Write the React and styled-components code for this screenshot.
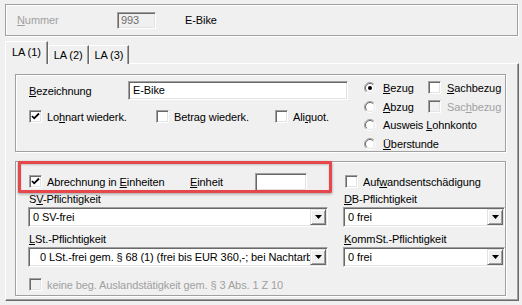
import React from 'react';
import styled, { createGlobalStyle, css } from 'styled-components';

const GlobalStyle = createGlobalStyle`
  html, body {
    margin: 0;
    padding: 0;
    background: #f0f0f0;
  }
  body {
    font-family: "Liberation Sans", Arial, sans-serif;
    font-size: 11px;
    letter-spacing: -0.1px;
    color: #000;
  }
  * {
    box-sizing: border-box;
  }
`;

const sunken = css`
  border: 1px solid;
  border-color: #a0a0a0 #fff #fff #a0a0a0;
  box-shadow: inset 1px 1px 0 #696969, inset -1px -1px 0 #e3e3e3;
`;

const raised = css`
  border: 1px solid;
  border-color: #e3e3e3 #696969 #696969 #e3e3e3;
  box-shadow: inset 1px 1px 0 #fff, inset -1px -1px 0 #a0a0a0;
`;

const Window = styled.div`
  width: 522px;
  height: 305px;
  padding: 4px 3px 0 5px;
  background: #f0f0f0;
  overflow: hidden;
`;

const EtchedBox = styled.div`
  position: relative;
  border: 1px solid #a0a0a0;
  box-shadow: inset 1px 1px 0 #fff, 1px 1px 0 #fff;
  width: ${p => p.$w}px;
  height: ${p => p.$h}px;
  margin-top: ${p => p.$mt || 0}px;
`;

const HeaderRow = styled.div`
  display: flex;
  align-items: center;
  height: 100%;
  padding-left: 11px;
`;

const Label = styled.span`
  display: inline-block;
  width: ${p => (p.$w ? `${p.$w}px` : 'auto')};
  flex: none;
  white-space: nowrap;
  color: ${p => (p.$disabled ? '#a0a0a0' : '#000')};
`;

const NumField = styled.div`
  ${sunken};
  width: 39px;
  height: 17px;
  padding: 1px 0 0 3px;
  color: #6d6d6d;
  background: #f0f0f0;
`;

const Title = styled.span`
  margin-left: 29px;
`;

const TabStrip = styled.div`
  display: flex;
  align-items: flex-end;
  height: 22px;
  margin-top: 6px;
  position: relative;
  z-index: 1;
  margin-bottom: -1px;
`;

const Tab = styled.div`
  height: ${p => (p.$active ? 23 : 19)}px;
  padding: ${p => (p.$active ? '4px 6px 0' : '3px 5px 0')};
  border-top: 1px solid #fff;
  border-left: 1px solid #fff;
  border-right: 1px solid #696969;
  box-shadow: inset -1px 0 0 #a0a0a0;
  background: #f0f0f0;
  white-space: nowrap;
`;

const Panel = styled.div`
  width: 514px;
  height: 238px;
  padding: 10px 0 0 9px;
  border-top: 1px solid #fff;
  border-left: 1px solid #fff;
  border-right: 1px solid #696969;
  border-bottom: 1px solid #696969;
  box-shadow: inset -1px -1px 0 #a0a0a0;
`;

const Split = styled.div`
  display: flex;
  height: 100%;
`;

const LeftPart = styled.div`
  width: 348px;
  padding: 6px 0 0 13px;
`;

const FieldRow = styled.div`
  display: flex;
  align-items: center;
  height: 19px;
`;

const TextField = styled.div`
  ${sunken};
  width: ${p => p.$w}px;
  height: ${p => p.$h || 19}px;
  padding: 2px 0 0 4px;
  background: #fff;
  white-space: nowrap;
`;

const CheckRow = styled.div`
  display: flex;
  align-items: center;
  height: 13px;
  margin-top: ${p => p.$mt || 0}px;
`;

const RightPart = styled.div`
  flex: 1;
  display: grid;
  grid-template-columns: 64px auto;
  grid-auto-rows: 19px;
  align-items: center;
  padding-top: 3px;
`;

const Wide = styled.div`
  grid-column: span 2;
`;

const Item = styled.label`
  display: inline-flex;
  align-items: center;
  gap: ${p => p.$gap || 5}px;
  width: ${p => (p.$w ? `${p.$w}px` : 'auto')};
  margin-left: ${p => p.$ml || 0}px;
  flex: none;
  white-space: nowrap;
  color: ${p => (p.$disabled ? '#a0a0a0' : '#000')};
`;

const Box = styled.span`
  ${sunken};
  display: inline-flex;
  align-items: center;
  justify-content: center;
  width: 13px;
  height: 13px;
  flex: none;
  background: ${p => (p.$disabled ? '#f0f0f0' : '#fff')};
`;

const Group2Body = styled.div`
  padding: 10px 0 0 13px;
`;

const TopLine = styled.div`
  display: flex;
  align-items: center;
  height: 19px;
`;

const ComboGrid = styled.div`
  display: grid;
  grid-template-columns: 300px 162px;
  column-gap: 15px;
  margin: 2px 0 0 -1px;
`;

const ComboCell = styled.div`
  display: flex;
  flex-direction: column;
  margin-top: ${p => p.$mt || 0}px;
`;

const ComboLabel = styled.div`
  height: 14px;
  line-height: 13px;
  padding-left: 1px;
  white-space: nowrap;
`;

const Combo = styled.div`
  ${sunken};
  display: flex;
  height: 20px;
  padding: 1px;
  background: #fff;
`;

const ComboText = styled.div`
  flex: 1;
  overflow: hidden;
  white-space: nowrap;
  padding: 2px 0 0 ${p => p.$indent || 3}px;
`;

const DropButton = styled.div`
  ${raised};
  width: 16px;
  flex: none;
  display: flex;
  align-items: center;
  justify-content: center;
  background: #f0f0f0;
`;

const Highlight = styled.div`
  position: absolute;
  left: 2px;
  top: -1px;
  width: 314px;
  height: 32px;
  border: 3px solid #e5474b;
  border-radius: 1px;
  box-shadow: 0 1px 3px rgba(0, 0, 0, 0.35), inset 0 1px 2px rgba(0, 0, 0, 0.2);
  pointer-events: none;
`;

const Check = ({ checked, disabled }) => (
  <Box $disabled={disabled}>
    {checked && (
      <svg width="9" height="9" viewBox="0 0 9 9">
        <path d="M1 4 L3.2 6.3 L8 1.5" fill="none" stroke="#000" strokeWidth="1.8" />
      </svg>
    )}
  </Box>
);

const Radio = ({ checked }) => (
  <svg width="12" height="12" viewBox="0 0 12 12" style={{ flex: 'none' }}>
    <circle cx="6" cy="6" r="5" fill="#fff" />
    <path d="M2.1 9.9 A5.5 5.5 0 0 1 9.9 2.1" fill="none" stroke="#a0a0a0" />
    <path d="M9.9 2.1 A5.5 5.5 0 0 1 2.1 9.9" fill="none" stroke="#fff" />
    <path d="M2.8 9.2 A4.5 4.5 0 0 1 9.2 2.8" fill="none" stroke="#696969" />
    <path d="M9.2 2.8 A4.5 4.5 0 0 1 2.8 9.2" fill="none" stroke="#e3e3e3" />
    {checked && <circle cx="6" cy="6" r="2" fill="#000" />}
  </svg>
);

const Arrow = () => (
  <svg width="7" height="4" viewBox="0 0 7 4">
    <polygon points="0,0 7,0 3.5,4" fill="#000" />
  </svg>
);

const Select = ({ value, indent }) => (
  <Combo>
    <ComboText $indent={indent}>{value}</ComboText>
    <DropButton>
      <Arrow />
    </DropButton>
  </Combo>
);

const App = () => (
  <Window>
    <GlobalStyle />
    <EtchedBox $w={513} $h={32}>
      <HeaderRow>
        <Label $w={100} $disabled>
          <u>N</u>ummer
        </Label>
        <NumField>993</NumField>
        <Title>E-Bike</Title>
      </HeaderRow>
    </EtchedBox>

    <TabStrip>
      <Tab $active>LA (1)</Tab>
      <Tab>LA (2)</Tab>
      <Tab>LA (3)</Tab>
    </TabStrip>

    <Panel>
      <EtchedBox $w={491} $h={78}>
        <Split>
          <LeftPart>
            <FieldRow>
              <Label $w={99}>
                <u>B</u>ezeichnung
              </Label>
              <TextField $w={220}>E-Bike</TextField>
            </FieldRow>
            <CheckRow $mt={10}>
              <Item $w={127}>
                <Check checked />
                <span>
                  Lo<u>h</u>nart wiederk.
                </span>
              </Item>
              <Item $w={119}>
                <Check />
                <span>
                  Betra<u>g</u> wiederk.
                </span>
              </Item>
              <Item>
                <Check />
                <span>
                  Ali<u>q</u>uot.
                </span>
              </Item>
            </CheckRow>
          </LeftPart>
          <RightPart>
            <Item $gap={7}>
              <Radio checked />
              <span>
                <u>B</u>ezug
              </span>
            </Item>
            <Item $gap={6}>
              <Check />
              <span>
                <u>S</u>achbezug
              </span>
            </Item>
            <Item $gap={7}>
              <Radio />
              <span>
                <u>A</u>bzug
              </span>
            </Item>
            <Item $gap={6} $disabled>
              <Check disabled />
              <span>
                Sac<u>h</u>bezug
              </span>
            </Item>
            <Wide>
              <Item $gap={7}>
                <Radio />
                <span>
                  Ausweis <u>L</u>ohnkonto
                </span>
              </Item>
            </Wide>
            <Wide>
              <Item $gap={7}>
                <Radio />
                <span>
                  <u>Ü</u>berstunde
                </span>
              </Item>
            </Wide>
          </RightPart>
        </Split>
      </EtchedBox>

      <EtchedBox $w={491} $h={135} $mt={9}>
        <Group2Body>
          <TopLine>
            <Item $w={161}>
              <Check checked />
              <span>
                Abrechnung in <u>E</u>inheiten
              </span>
            </Item>
            <Label $w={65}>
              <u>E</u>inheit
            </Label>
            <TextField $w={52} $h={18} />
            <Item $ml={38}>
              <Check />
              <span>
                Auf<u>w</u>andsentschädigung
              </span>
            </Item>
          </TopLine>
          <ComboGrid>
            <ComboCell>
              <ComboLabel>
                S<u>V</u>-Pflichtigkeit
              </ComboLabel>
              <Select value="0 SV-frei" />
            </ComboCell>
            <ComboCell>
              <ComboLabel>
                <u>D</u>B-Pflichtigkeit
              </ComboLabel>
              <Select value="0 frei" />
            </ComboCell>
            <ComboCell $mt={6}>
              <ComboLabel>
                <u>L</u>St.-Pflichtigkeit
              </ComboLabel>
              <Select
                indent={10}
                value="0 LSt.-frei gem. § 68 (1) (frei bis EUR 360,-; bei Nachtarbeit)"
              />
            </ComboCell>
            <ComboCell $mt={6}>
              <ComboLabel>
                <u>K</u>ommSt.-Pflichtigkeit
              </ComboLabel>
              <Select value="0 frei" />
            </ComboCell>
          </ComboGrid>
          <CheckRow $mt={11}>
            <Item $disabled>
              <Check disabled />
              <span>keine beg. Auslandstätigkeit gem. § 3 Abs. 1 Z 10</span>
            </Item>
          </CheckRow>
        </Group2Body>
        <Highlight />
      </EtchedBox>
    </Panel>
  </Window>
);

export default App;
